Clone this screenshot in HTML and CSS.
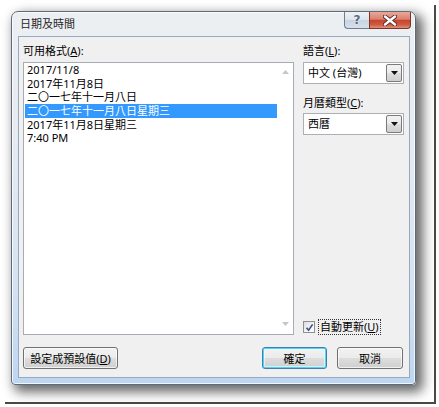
FILE: index.html
```html
<!DOCTYPE html>
<html lang="zh-Hant">
<head>
<meta charset="utf-8">
<title>日期及時間</title>
<link rel="stylesheet" href="styles.css">
</head>
<body>
<div class="photo">
  <div class="window">
    <div class="titlebar">
      <span class="title">日期及時間</span>
      <div class="caption-btns">
        <div class="cb help">?</div>
        <div class="cb close">
          <svg width="14" height="11" viewBox="0 0 14 11">
            <path d="M2 1.5 L12 9.5 M12 1.5 L2 9.5" stroke="#5a2a24" stroke-width="4.2" stroke-linecap="round" fill="none"/>
            <path d="M2 1.5 L12 9.5 M12 1.5 L2 9.5" stroke="#ffffff" stroke-width="2.4" stroke-linecap="round" fill="none"/>
          </svg>
        </div>
      </div>
    </div>
    <div class="client">
      <div class="main">
        <div class="col-left">
          <div class="label">可用格式(<u>A</u>):</div>
          <div class="listbox">
            <ul class="items">
              <li>2017/11/8</li>
              <li>2017年11月8日</li>
              <li>二〇一七年十一月八日</li>
              <li class="selected">二〇一七年十一月八日星期三</li>
              <li>2017年11月8日星期三</li>
              <li>7:40 PM</li>
            </ul>
            <div class="vscroll">
              <svg class="arr" width="7" height="4" viewBox="0 0 7 4"><path d="M0 4 L3.5 0 L7 4 Z" fill="#c4c6c8"/></svg>
              <svg class="arr" width="7" height="4" viewBox="0 0 7 4"><path d="M0 0 L3.5 4 L7 0 Z" fill="#c4c6c8"/></svg>
            </div>
          </div>
        </div>
        <div class="col-right">
          <div class="label">語言(<u>L</u>):</div>
          <div class="combo">
            <span class="combo-text">中文 (台灣)</span>
            <span class="combo-btn"><svg width="7" height="4" viewBox="0 0 7 4"><path d="M0 0 L3.5 4 L7 0 Z" fill="#111"/></svg></span>
          </div>
          <div class="label label-2">月曆類型(<u>C</u>):</div>
          <div class="combo">
            <span class="combo-text">西曆</span>
            <span class="combo-btn"><svg width="7" height="4" viewBox="0 0 7 4"><path d="M0 0 L3.5 4 L7 0 Z" fill="#111"/></svg></span>
          </div>
          <div class="check">
            <span class="box">
              <svg width="9" height="9" viewBox="0 0 9 9"><path d="M1.5 4.8 L3.6 7.2 L7.6 1.4" stroke="#3c4f8c" stroke-width="1.6" fill="none"/></svg>
            </span>
            <span class="focus">自動更新(<u>U</u>)</span>
          </div>
        </div>
      </div>
      <div class="buttons">
        <button class="btn btn-wide">設定成預設值(<u>D</u>)</button>
        <span class="spacer"></span>
        <button class="btn btn-default">確定</button>
        <button class="btn">取消</button>
      </div>
    </div>
  </div>
</div>
</body>
</html>
```
FILE: styles.css
```css
* { box-sizing: border-box; }

html, body {
  margin: 0;
  padding: 0;
  background: #ffffff;
  font-family: "Noto Sans", "Noto Sans CJK TC", sans-serif;
  font-size: 11px;
  color: #000;
}

.photo {
  margin: 5px 0 0 5px;
  width: 431px;
  height: 399px;
  padding: 6px 0 0 6px;
  border-right: 2px solid #4a4a44;
  border-bottom: 2px solid #4a4a44;
}

.window {
  width: 405px;
  height: 374px;
  border: 1px solid #5f6b7a;
  border-radius: 7px 7px 4px 4px;
  background: linear-gradient(to bottom, #eceff2 0%, #e6ebf1 35%, #d3e2f2 75%, #bcd6f2 100%);
  box-shadow: 5px 5px 12px 2px rgba(0, 0, 0, 0.6), inset 0 0 0 1px rgba(255, 255, 255, 0.75);
  display: flex;
  flex-direction: column;
}

.titlebar {
  height: 24px;
  display: flex;
  align-items: flex-start;
  flex: none;
}

.title {
  padding: 5px 0 0 8px;
  font-size: 11px;
  line-height: 13px;
  color: #262626;
}

.caption-btns {
  margin-left: auto;
  margin-right: 4px;
  display: flex;
}

.cb {
  height: 17px;
  display: flex;
  align-items: center;
  justify-content: center;
  border: 1px solid #6d7d92;
  border-top: none;
}

.help {
  width: 25px;
  border-radius: 0 0 0 4px;
  border-right: none;
  background: linear-gradient(to bottom, #eef2f6 0%, #dbe3ec 50%, #c8d3df 51%, #d7e0ea 100%);
  font-family: "DejaVu Sans", sans-serif;
  font-weight: bold;
  font-size: 12px;
  color: #5b6a7c;
  text-shadow: 0 0 2px #fff;
}

.close {
  width: 42px;
  border-color: #7d3528;
  border-radius: 0 0 4px 0;
  background: linear-gradient(to bottom, #e9a99b 0%, #dc806d 45%, #c8452f 52%, #cf5b43 80%, #e0907c 100%);
}

.client {
  flex: 1;
  margin: 0 5px 6px 6px;
  background: #f0f0f0;
  border: 1px solid #98a9bf;
  padding: 7px 5px 7px 4px;
  display: flex;
  flex-direction: column;
}

.main {
  display: grid;
  grid-template-columns: 271px 101px;
  column-gap: 9px;
}

.label {
  height: 14px;
  line-height: 14px;
  margin-bottom: 4px;
  white-space: nowrap;
}

u { text-decoration: underline; text-underline-offset: 1px; }

.col-left {
  display: flex;
  flex-direction: column;
}

.listbox {
  height: 273px;
  border: 1px solid #a5acb5;
  background: #ffffff;
  display: flex;
}

.items {
  list-style: none;
  margin: 0;
  padding: 0 0 0 1px;
  flex: 1;
}

.items li {
  height: 13.7px;
  line-height: 13.7px;
  padding-left: 2px;
  white-space: nowrap;
}

.items li.selected {
  background: #3399ff;
  color: #ffffff;
}

.vscroll {
  width: 16px;
  display: flex;
  flex-direction: column;
  align-items: center;
  justify-content: space-between;
  padding: 7px 0 8px 0;
}

.col-right {
  display: flex;
  flex-direction: column;
}

.combo {
  height: 22px;
  border: 1px solid #acb0b6;
  background: #ffffff;
  display: flex;
  align-items: stretch;
}

.combo-text {
  flex: 1;
  padding-left: 4px;
  line-height: 20px;
}

.combo-btn {
  width: 16px;
  margin: 1px;
  border: 1px solid #7a7a7a;
  border-radius: 2px;
  background: linear-gradient(to bottom, #f2f2f2 0%, #ebebeb 50%, #dddddd 51%, #cfcfcf 100%);
  display: flex;
  align-items: center;
  justify-content: center;
}

.label-2 {
  margin-top: 12px;
  margin-bottom: 3px;
}

.check {
  margin-top: auto;
  display: flex;
  align-items: center;
  gap: 3px;
}

.box {
  width: 12px;
  height: 12px;
  border: 1px solid #8e8f8f;
  background: linear-gradient(135deg, #dcdcdc 0%, #f6f6f6 60%, #ffffff 100%);
  display: flex;
  align-items: center;
  justify-content: center;
}

.focus {
  border: 1px dotted #333;
  padding: 0 1px;
  line-height: 14px;
  white-space: nowrap;
}

.buttons {
  margin-top: 12px;
  display: flex;
  gap: 10px;
  padding-right: 1px;
}

.spacer { flex: 1; }

.btn {
  height: 22px;
  width: 66px;
  padding: 0;
  font-family: inherit;
  font-size: 11px;
  color: #000;
  border: 1px solid #707070;
  border-radius: 3px;
  background: linear-gradient(to bottom, #f2f2f2 0%, #ebebeb 48%, #dddddd 52%, #cfcfcf 100%);
  box-shadow: inset 0 0 0 1px rgba(255, 255, 255, 0.7);
}

.btn-wide {
  width: 95px;
}

.btn-default {
  width: 65px;
  border-color: #3c7fb1;
  box-shadow: inset 0 0 0 1px #48d8fb, inset 0 0 0 2px rgba(255, 255, 255, 0.5);
}
```
